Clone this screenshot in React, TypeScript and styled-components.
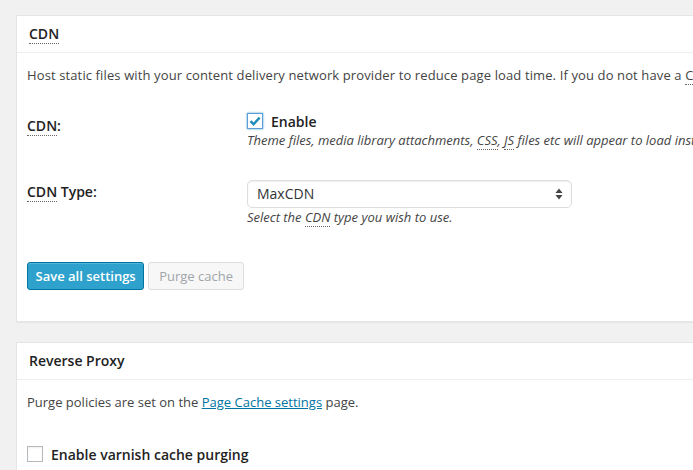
import styled, { createGlobalStyle } from "styled-components";

const GlobalStyle = createGlobalStyle`
  html, body {
    margin: 0;
    padding: 0;
    background: #f1f1f1;
    overflow: hidden;
  }
  body {
    font-family: "Open Sans", "Liberation Sans", sans-serif;
    font-size: 13px;
    color: #444;
  }
`;

export default function App() {
  return (
    <>
      <GlobalStyle />
      <Page>
        <Postbox>
          <BoxTitle>
            <Abbr title="Content Delivery Network">CDN</Abbr>
          </BoxTitle>
          <Inside>
            <Description $wide>
              Host static files with your content delivery network provider to reduce page load time. If you do not have a{" "}
              <Abbr>CDN</Abbr> provider, try MaxCDN.
            </Description>

            <FormTable>
              <Row>
                <Label>
                  <Abbr>CDN</Abbr>:
                </Label>
                <Field>
                  <CheckLine>
                    <CheckBox $focused>
                      <svg width="12" height="10" viewBox="0 0 12 10">
                        <path d="M1.5 5.2 L4.6 8.2 L10.6 1.6" fill="none" stroke="#1e8cbe" strokeWidth="2.4" />
                      </svg>
                    </CheckBox>
                    <CheckText>Enable</CheckText>
                  </CheckLine>
                  <Hint>
                    Theme files, media library attachments, <Abbr>CSS</Abbr>, <Abbr>JS</Abbr> files etc will appear to load instantly for site visitors.
                  </Hint>
                </Field>
              </Row>
              <Row>
                <Label>
                  <Abbr>CDN</Abbr> Type:
                </Label>
                <Field>
                  <SelectWrap>
                    <Select defaultValue="maxcdn">
                      <option value="maxcdn">MaxCDN</option>
                    </Select>
                    <SelectArrows width="8" height="12" viewBox="0 0 8 12">
                      <path d="M4 0.5 L7.5 5 L0.5 5 Z" fill="#444" />
                      <path d="M4 11.5 L7.5 7 L0.5 7 Z" fill="#444" />
                    </SelectArrows>
                  </SelectWrap>
                  <Hint>
                    Select the <Abbr>CDN</Abbr> type you wish to use.
                  </Hint>
                </Field>
              </Row>
            </FormTable>

            <Actions>
              <Button $primary>Save all settings</Button>
              <Button disabled>Purge cache</Button>
            </Actions>
          </Inside>
        </Postbox>

        <Postbox>
          <BoxTitle>Reverse Proxy</BoxTitle>
          <Inside>
            <Description>
              Purge policies are set on the <Link href="#">Page Cache settings</Link> page.
            </Description>
            <VarnishLine>
              <CheckBox />
              <CheckText>Enable varnish cache purging</CheckText>
            </VarnishLine>
          </Inside>
        </Postbox>
      </Page>
    </>
  );
}

const Page = styled.div`
  display: flex;
  flex-direction: column;
  gap: 20px;
  padding: 15px 0 0 16px;
`;

const Postbox = styled.div`
  width: 900px;
  background: #fff;
  border: 1px solid #e5e5e5;
  box-shadow: 0 1px 1px rgba(0, 0, 0, 0.04);
`;

const BoxTitle = styled.h3`
  margin: 0;
  padding: 8px 12px;
  font-size: 14px;
  font-weight: 600;
  line-height: 19.6px;
  color: #222;
  border-bottom: 1px solid #eee;
`;

const Inside = styled.div`
  padding: 0 10px 31px;
`;

const Abbr = styled.abbr`
  text-decoration: none;
  border-bottom: 1px dotted #666;
  cursor: help;
`;

const Description = styled.p<{ $wide?: boolean }>`
  margin: 13px 0;
  font-size: 13px;
  line-height: 19.5px;
  letter-spacing: ${(p) => (p.$wide ? "0.12px" : "0")};
  white-space: nowrap;
  color: #444;
`;

const FormTable = styled.div`
  display: flex;
  flex-direction: column;
`;

const Row = styled.div`
  display: grid;
  grid-template-columns: 220px 1fr;
`;

const Label = styled.div`
  padding-top: 19px;
  font-size: 14px;
  font-weight: 600;
  line-height: 18px;
  color: #222;
`;

const Field = styled.div`
  padding: 13px 0;
  display: flex;
  flex-direction: column;
  align-items: flex-start;
`;

const CheckLine = styled.label`
  display: flex;
  align-items: center;
  gap: 8px;
  height: 20px;
`;

const CheckBox = styled.span<{ $focused?: boolean }>`
  box-sizing: border-box;
  display: inline-flex;
  align-items: center;
  justify-content: center;
  width: 16px;
  height: 16px;
  background: #fff;
  border: 1px solid ${(p) => (p.$focused ? "#5b9dd9" : "#b4b9be")};
  box-shadow: ${(p) =>
    p.$focused
      ? "0 0 2px rgba(30, 140, 190, 0.8)"
      : "inset 0 1px 2px rgba(0, 0, 0, 0.07)"};
`;

const CheckText = styled.span`
  font-size: 14px;
  font-weight: 600;
  color: #222;
`;

const Hint = styled.p`
  margin: 0;
  font-size: 13px;
  font-style: italic;
  line-height: 19.5px;
  white-space: nowrap;
  color: #444;
`;

const SelectWrap = styled.div`
  position: relative;
  margin-top: 3px;
`;

const Select = styled.select`
  appearance: none;
  -webkit-appearance: none;
  box-sizing: border-box;
  width: 325px;
  height: 28px;
  padding: 0 24px 0 9px;
  font-family: "Open Sans", "Liberation Sans", sans-serif;
  font-size: 14px;
  color: #333;
  background: #fff;
  border: 1px solid #ddd;
  border-radius: 5px;
  box-shadow: inset 0 1px 2px rgba(0, 0, 0, 0.07);
  outline: none;
`;

const SelectArrows = styled.svg`
  position: absolute;
  right: 9px;
  top: 8px;
  pointer-events: none;
`;

const Actions = styled.div`
  display: flex;
  gap: 4px;
  margin-top: 22px;
`;

const Button = styled.button<{ $primary?: boolean }>`
  box-sizing: border-box;
  height: 28px;
  padding: 0 ${(p) => (p.$primary ? "7.5px" : "10px")};
  font-family: "Open Sans", "Liberation Sans", sans-serif;
  font-size: 13px;
  font-weight: ${(p) => (p.$primary ? 600 : 400)};
  border-radius: 3px;
  border: 1px solid ${(p) => (p.$primary ? "#0074a2" : "#ddd")};
  background: ${(p) => (p.$primary ? "#2ea2cc" : "#f7f7f7")};
  color: ${(p) => (p.$primary ? "#fff" : "#a0a5aa")};
  box-shadow: ${(p) =>
    p.$primary ? "inset 0 1px 0 rgba(120, 200, 230, 0.5)" : "none"};
`;

const Link = styled.a`
  color: #0074a2;
  text-decoration: underline;
`;

const VarnishLine = styled.label`
  display: flex;
  align-items: center;
  gap: 8px;
  height: 20px;
  margin-top: 32px;
`;
